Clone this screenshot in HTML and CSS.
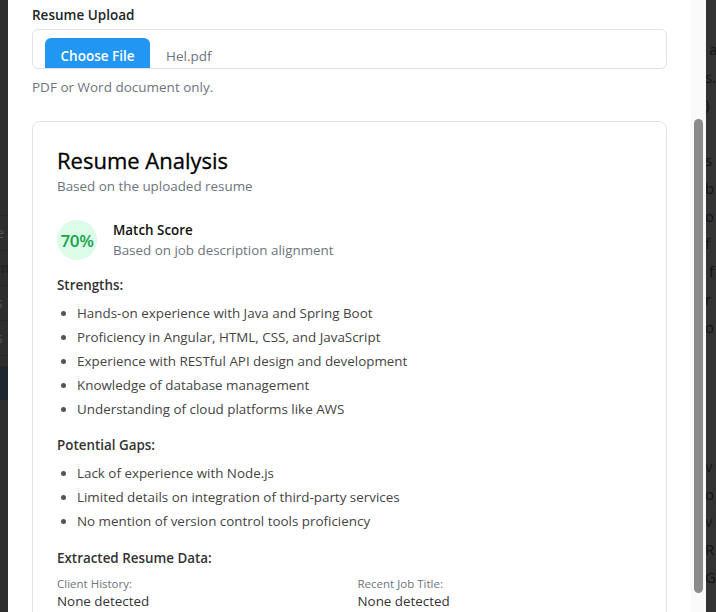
FILE: index.html
```html
<!DOCTYPE html>
<html>
<head>
<meta charset="utf-8">
<link rel="stylesheet" href="styles.css">
</head>
<body>
<div class="screen">
  <div class="bg-left">
    <div class="bgl-gap"></div>
    <div class="bgl-row">e</div>
    <div class="bgl-row bold">m</div>
    <div class="bgl-row">s</div>
    <div class="bgl-row">s</div>
    <div class="bgl-block"></div>
  </div>
  <div class="modal">
    <div class="field-label">Resume Upload</div>
    <div class="file-box">
      <span class="file-btn">Choose File</span>
      <span class="file-name">Hel.pdf</span>
    </div>
    <div class="hint">PDF or Word document only.</div>
    <div class="card">
      <h2 class="card-title">Resume Analysis</h2>
      <div class="card-sub">Based on the uploaded resume</div>
      <div class="score-row">
        <div class="score-circle">70%</div>
        <div class="score-text">
          <div class="score-title">Match Score</div>
          <div class="score-sub">Based on job description alignment</div>
        </div>
      </div>
      <div class="section-title">Strengths:</div>
      <ul class="items">
        <li>Hands-on experience with Java and Spring Boot</li>
        <li>Proficiency in Angular, HTML, CSS, and JavaScript</li>
        <li>Experience with RESTful API design and development</li>
        <li>Knowledge of database management</li>
        <li>Understanding of cloud platforms like AWS</li>
      </ul>
      <div class="section-title">Potential Gaps:</div>
      <ul class="items">
        <li>Lack of experience with Node.js</li>
        <li>Limited details on integration of third-party services</li>
        <li>No mention of version control tools proficiency</li>
      </ul>
      <div class="section-title">Extracted Resume Data:</div>
      <div class="data-grid">
        <div class="data-cell">
          <div class="data-label">Client History:</div>
          <div class="data-value">None detected</div>
        </div>
        <div class="data-cell">
          <div class="data-label">Recent Job Title:</div>
          <div class="data-value">None detected</div>
        </div>
      </div>
    </div>
  </div>
  <div class="scroll-track"><div class="scroll-thumb"></div></div>
  <div class="bg-right">
    <div class="bgr-line"></div>
    <div class="bgr-line">&nbsp;a</div>
    <div class="bgr-line">s.</div>
    <div class="bgr-line">)</div>
    <div class="bgr-line"></div>
    <div class="bgr-line">s</div>
    <div class="bgr-line">b</div>
    <div class="bgr-line">o</div>
    <div class="bgr-line">f</div>
    <div class="bgr-line">&nbsp;f</div>
    <div class="bgr-line">r</div>
    <div class="bgr-line">o</div>
    <div class="bgr-line"></div>
    <div class="bgr-line"></div>
    <div class="bgr-line"></div>
    <div class="bgr-line"></div>
    <div class="bgr-line">v</div>
    <div class="bgr-line">o</div>
    <div class="bgr-line">v</div>
    <div class="bgr-line">R</div>
    <div class="bgr-line">G</div>
  </div>
</div>
</body>
</html>
```

FILE: styles.css
```css
* { box-sizing: border-box; }
html, body { margin: 0; padding: 0; }
body {
  font-family: "Open Sans", "Noto Sans", sans-serif;
  font-size: 14px;
  color: #212529;
  background: #2f2f2f;
  width: 716px;
  height: 612px;
  overflow: hidden;
}
.screen {
  display: flex;
  height: 612px;
  overflow: hidden;
}
.bg-left {
  width: 8px;
  flex: none;
  background: #2e2e2e;
  overflow: hidden;
  color: #555;
  font-size: 14px;
  display: flex;
  flex-direction: column;
}
.bgl-gap { height: 216px; border-bottom: 1px solid #262626; }
.bgl-row {
  height: 35px;
  line-height: 34px;
  border-bottom: 1px solid #262626;
  text-indent: -4px;
  white-space: nowrap;
}
.bgl-row.bold { font-weight: 700; color: #222; }
.bgl-block { height: 34px; background: #1e2630; margin-top: 10px; }
.modal {
  width: 683px;
  flex: none;
  background: #fff;
  padding: 6px 24px 0 24px;
  overflow: hidden;
}
.field-label {
  font-weight: 600;
  font-size: 13.5px;
  color: #212529;
  line-height: 18px;
  margin-bottom: 5px;
}
.file-box {
  height: 40px;
  border: 1px solid #e3e3e3;
  border-radius: 6px;
  overflow: hidden;
  display: flex;
  align-items: flex-start;
  padding-left: 12px;
}
.file-btn {
  margin-top: 8px;
  width: 105px;
  height: 40px;
  background: #2196f3;
  color: #fff;
  font-weight: 600;
  font-size: 13.5px;
  border-radius: 6px;
  text-align: center;
  line-height: 36px;
  flex: none;
}
.file-name {
  margin-top: 8px;
  margin-left: 16px;
  line-height: 36px;
  color: #6c757d;
  font-size: 13.5px;
}
.hint {
  margin-top: 9px;
  color: #6c757d;
  font-size: 13.5px;
  line-height: 18px;
}
.card {
  margin-top: 25px;
  border: 1px solid #e3e3e3;
  border-radius: 8px;
  padding: 24px 24px 24px 24px;
  height: 600px;
}
.card-title {
  margin: 0;
  font-size: 22px;
  font-weight: 500;
  color: #000;
  line-height: 28px;
  -webkit-text-stroke: 0.3px #000;
}
.card-sub {
  color: #6c757d;
  font-size: 13.4px;
  line-height: 18px;
  margin-top: 3px;
}
.score-row {
  display: flex;
  align-items: center;
  margin-top: 25px;
  margin-bottom: 4px;
}
.score-circle {
  width: 40px;
  height: 40px;
  border-radius: 50%;
  background: #dcfce7;
  color: #16a34a;
  font-weight: 600;
  font-size: 17px;
  display: flex;
  align-items: center;
  justify-content: center;
  flex: none;
  letter-spacing: -0.3px;
}
.score-text { margin-left: 16px; }
.score-title {
  font-weight: 600;
  font-size: 13.4px;
  color: #111;
  line-height: 20px;
}
.score-sub {
  color: #6c757d;
  font-size: 13.4px;
  line-height: 20px;
}
.section-title {
  font-weight: 600;
  font-size: 13.4px;
  color: #333;
  line-height: 20px;
  margin-top: 14.5px;
}
.items {
  margin: 6px 0 0 0;
  padding: 0 0 0 20px;
  color: #444;
  font-size: 13.4px;
}
.items li {
  line-height: 24px;
}
.items li::marker { color: #555; }
.data-grid {
  display: grid;
  grid-template-columns: 1fr 1fr;
  gap: 16px;
  margin-top: 8.5px;
}
.data-label {
  font-size: 11.5px;
  color: #6c757d;
  line-height: 15px;
}
.data-value {
  font-size: 13.4px;
  color: #333;
  line-height: 20px;
}
.scroll-track {
  width: 15px;
  flex: none;
  background: #f9f9f9;
  display: flex;
  flex-direction: column;
  align-items: center;
  padding-top: 119px;
}
.scroll-thumb {
  width: 9px;
  height: 474px;
  background: #8b8b8b;
  border-radius: 5px;
}
.bg-right {
  flex: 1;
  background: #333;
  color: #151515;
  font-size: 15px;
  overflow: hidden;
  white-space: nowrap;
  padding-top: 7px;
}
.bgr-line {
  height: 27.8px;
  line-height: 28px;
  text-indent: -1px;
}
```
